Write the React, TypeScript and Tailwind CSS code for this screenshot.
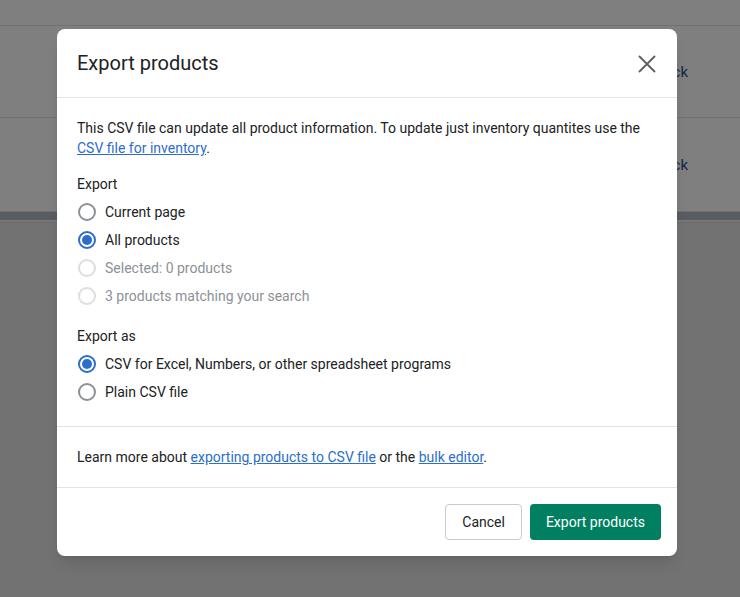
type Option = { label: string; checked?: boolean; disabled?: boolean };

const exportOptions: Option[] = [
  { label: 'Current page' },
  { label: 'All products', checked: true },
  { label: 'Selected: 0 products', disabled: true },
  { label: '3 products matching your search', disabled: true },
];

const formatOptions: Option[] = [
  { label: 'CSV for Excel, Numbers, or other spreadsheet programs', checked: true },
  { label: 'Plain CSV file' },
];

function Radio({ label, checked, disabled }: Option) {
  return (
    <label className="flex items-center h-[28px] gap-[9px]">
      {checked ? (
        <span className="w-[18px] h-[18px] rounded-full border-2 border-[#2c6ecb] flex items-center justify-center ml-[1px]">
          <span className="w-[10px] h-[10px] rounded-full bg-[#2c6ecb]" />
        </span>
      ) : (
        <span
          className={
            disabled
              ? 'w-[18px] h-[18px] rounded-full border-2 border-[#dcdee0] ml-[1px]'
              : 'w-[18px] h-[18px] rounded-full border-2 border-[#8c9196] ml-[1px]'
          }
        />
      )}
      <span className={disabled ? 'text-[#8c9196]' : 'text-[#202223]'}>{label}</span>
    </label>
  );
}

export default function App() {
  return (
    <div className="relative w-[740px] h-[597px] overflow-hidden bg-[#e4e4e4] font-['Roboto',sans-serif] text-[14px] leading-[20px]">
      {/* page behind the dialog */}
      <div className="flex flex-col bg-white">
        <div className="h-[26px] border-b border-[#e1e3e5]" />
        <div className="h-[92px] border-b border-[#e1e3e5] flex items-center justify-end pr-[52px] text-[#2c4f7c] text-[15px]">
          In stock
        </div>
        <div className="h-[94px] border-b border-[#e1e3e5] flex items-center justify-end pr-[52px] text-[#2c4f7c] text-[15px]">
          In stock
        </div>
      </div>
      <div className="h-[8px] bg-[#b2bac2]" />
      <div className="h-[3px] border-b border-[#d8d8d8] bg-[#eeeeee]" />

      {/* overlay */}
      <div className="absolute inset-0 bg-black/50 flex items-start">
        <div className="mt-[29px] ml-[57px] w-[620px] bg-white rounded-[8px] flex flex-col shadow-lg">
          <div className="h-[69px] pl-[20px] pr-[20px] border-b border-[#e1e3e5] flex items-center justify-between">
            <h2 className="text-[20px] leading-[28px] text-[#202223]">Export products</h2>
            <svg className="w-[20px] h-[20px] text-[#5c5f62] mt-[1px]" viewBox="0 0 20 20" fill="none" stroke="currentColor" strokeWidth={1.8}>
              <path d="M2 2l16 16M18 2L2 18" />
            </svg>
          </div>

          <div className="p-[20px] border-b border-[#e1e3e5] text-[#202223]">
            <p>
              This CSV file can update all product information. To update just inventory quantites use the{' '}
              <a className="text-[#2c6ecb] underline">CSV file for inventory</a>.
            </p>
            <div className="mt-[16px]">Export</div>
            <div className="mt-[4px] flex flex-col">
              {exportOptions.map((o) => (
                <Radio key={o.label} {...o} />
              ))}
            </div>
            <div className="mt-[16px]">Export as</div>
            <div className="mt-[4px] flex flex-col">
              {formatOptions.map((o) => (
                <Radio key={o.label} {...o} />
              ))}
            </div>
          </div>

          <div className="p-[20px] border-b border-[#e1e3e5] text-[#202223]">
            Learn more about <a className="text-[#2c6ecb] underline">exporting products to CSV file</a> or the{' '}
            <a className="text-[#2c6ecb] underline">bulk editor</a>.
          </div>

          <div className="flex justify-end gap-[8px] p-[16px]">
            <button className="h-[36px] px-[16px] rounded-[4px] border border-[#c9cccf] text-[#202223] bg-white">
              Cancel
            </button>
            <button className="h-[36px] px-[16px] rounded-[4px] bg-[#008060] text-white">Export products</button>
          </div>
        </div>
      </div>
    </div>
  );
}
